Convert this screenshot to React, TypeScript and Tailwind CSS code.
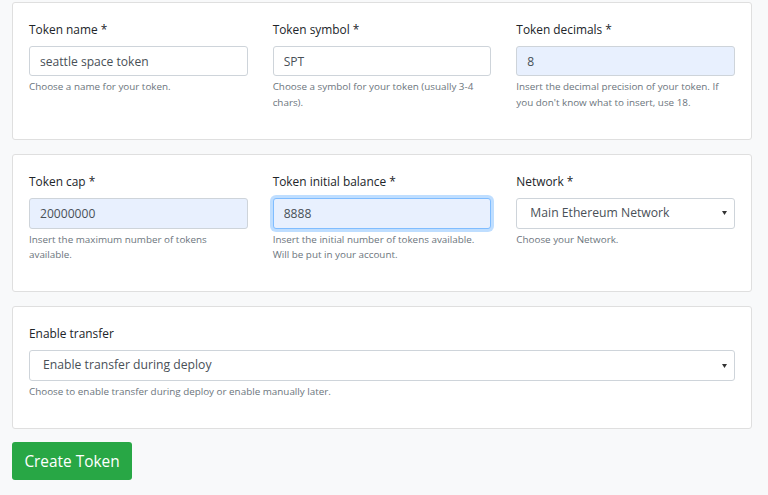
import React from "react";

const font = { fontFamily: '"Open Sans", "Noto Sans", Arial, sans-serif' };

function Label({ children }: { children: React.ReactNode }) {
  return (
    <label className="block mb-[7px] text-[11.9px] leading-[20px] text-[#212529]">
      {children}
    </label>
  );
}

function Help({ children }: { children: React.ReactNode }) {
  return (
    <small className="block mt-[3px] text-[9.85px] leading-[15.4px] text-[#6c757d]">
      {children}
    </small>
  );
}

function Input({
  value,
  filled,
  focused,
}: {
  value: string;
  filled?: boolean;
  focused?: boolean;
}) {
  let cls =
    "w-full h-[30.4px] px-[10px] rounded-[3px] border text-[12.1px] text-[#495057] outline-none ";
  if (focused) {
    cls += "bg-[#e8f0fe] border-[#80bdff] shadow-[0_0_0_3px_rgba(0,123,255,0.25)]";
  } else if (filled) {
    cls += "bg-[#e8f0fe] border-[#ced4da]";
  } else {
    cls += "bg-white border-[#ced4da]";
  }
  return <input className={cls} style={font} defaultValue={value} readOnly />;
}

function Select({ value }: { value: string }) {
  return (
    <div className="w-full h-[30.4px] pl-[13px] pr-[7px] flex items-center justify-between rounded-[3px] border border-[#ced4da] bg-white">
      <span className="text-[12.2px] text-[#495057]">{value}</span>
      <svg width="5" height="4" viewBox="0 0 5 4">
        <path d="M0 0 L5 0 L2.5 4 Z" fill="#333" />
      </svg>
    </div>
  );
}

function Card({ children }: { children: React.ReactNode }) {
  return (
    <div className="bg-white border border-[#dfdfdf] rounded-[3px] px-4 pt-4 pb-4 mb-[14px]">
      {children}
    </div>
  );
}

function Field({ children }: { children: React.ReactNode }) {
  return <div className="mb-[13px]">{children}</div>;
}

export default function App() {
  return (
    <div className="min-h-screen bg-[#f8f9fa] pl-3 pr-4 pt-[2px]" style={font}>
      <Card>
        <div className="grid grid-cols-3 gap-x-[25px]">
          <Field>
            <Label>Token name *</Label>
            <Input value="seattle space token" />
            <Help>Choose a name for your token.</Help>
          </Field>
          <Field>
            <Label>Token symbol *</Label>
            <Input value="SPT" />
            <Help>Choose a symbol for your token (usually 3-4 chars).</Help>
          </Field>
          <Field>
            <Label>Token decimals *</Label>
            <Input value="8" filled />
            <Help>
              Insert the decimal precision of your token. If you don't know what to
              insert, use 18.
            </Help>
          </Field>
        </div>
      </Card>

      <Card>
        <div className="grid grid-cols-3 gap-x-[25px]">
          <Field>
            <Label>Token cap *</Label>
            <Input value="20000000" filled />
            <Help>Insert the maximum number of tokens available.</Help>
          </Field>
          <Field>
            <Label>Token initial balance *</Label>
            <Input value="8888" focused />
            <Help>
              Insert the initial number of tokens available. Will be put in your
              account.
            </Help>
          </Field>
          <Field>
            <Label>Network *</Label>
            <Select value="Main Ethereum Network" />
            <Help>Choose your Network.</Help>
          </Field>
        </div>
      </Card>

      <Card>
        <Field>
          <Label>Enable transfer</Label>
          <Select value="Enable transfer during deploy" />
          <Help>Choose to enable transfer during deploy or enable manually later.</Help>
        </Field>
      </Card>

      <button className="h-[38px] w-[120px] -mt-[1px] rounded-[3px] bg-[#28a745] text-white text-[15.4px]">
        Create Token
      </button>
    </div>
  );
}
